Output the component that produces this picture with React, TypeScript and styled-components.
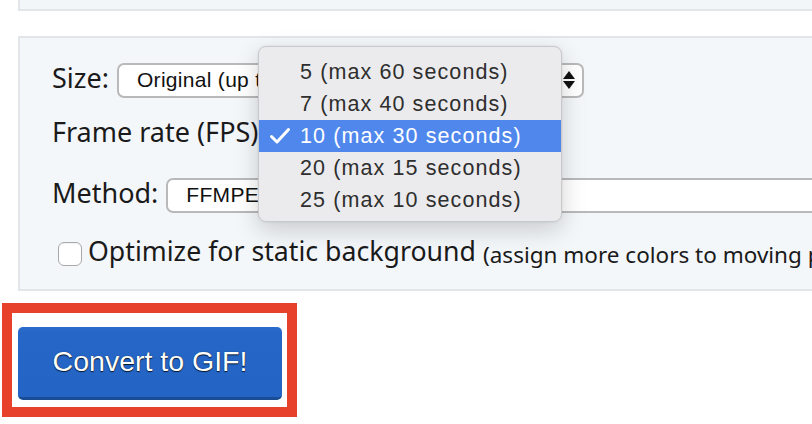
import React from "react";
import styled, { createGlobalStyle } from "styled-components";

const GlobalStyle = createGlobalStyle`
  html, body {
    margin: 0;
    padding: 0;
    background: #ffffff;
    overflow: hidden;
  }
  body {
    font-family: "Noto Sans", "Open Sans", sans-serif;
    color: #1a1a1a;
  }
  * { box-sizing: border-box; }
`;

const Page = styled.div`
  position: relative;
  width: 812px;
  height: 424px;
  overflow: hidden;
`;

const TopPanel = styled.div`
  margin-left: 18px;
  width: 900px;
  height: 11px;
  background: #f3f6f9;
  border: 2px solid #e2e6ea;
  border-top: none;
`;

const OptionsPanel = styled.div`
  margin: 25px 0 0 18px;
  width: 900px;
  height: 255px;
  background: #f4f7fa;
  border: 2px solid #e2e6ea;
  padding: 0 0 0 32px;
  display: flex;
  flex-direction: column;
`;

const Row = styled.div<{ $mt: number }>`
  display: flex;
  align-items: center;
  height: 36px;
  margin-top: ${(p) => p.$mt}px;
`;

const Label = styled.span<{ $gap?: number }>`
  font-size: 27px;
  line-height: 1;
  margin-right: ${(p) => p.$gap ?? 8}px;
  white-space: nowrap;
  position: relative;
  top: -3px;
`;

const Select = styled.div<{ $width: number }>`
  display: flex;
  align-items: center;
  justify-content: space-between;
  width: ${(p) => p.$width}px;
  height: 35px;
  background: #ffffff;
  border: 2px solid #b9b9b9;
  border-radius: 7px;
  padding: 0 6px 0 18px;
  font-family: "Liberation Sans", Arial, sans-serif;
  font-size: 21px;
  letter-spacing: 0.3px;
  color: #111;
  white-space: nowrap;
  overflow: hidden;
`;

const Arrows = styled.svg`
  flex: none;
`;

const CheckRow = styled.label`
  display: flex;
  align-items: center;
  white-space: nowrap;
`;

const CheckBox = styled.span`
  display: inline-block;
  width: 24px;
  height: 24px;
  margin: 0 6px 0 6px;
  background: #ffffff;
  border: 1px solid #a9a9a9;
  border-radius: 6px;
  box-shadow: inset 0 1px 1px rgba(0, 0, 0, 0.05);
  flex: none;
`;

const CheckText = styled.span`
  font-size: 26.7px;
  line-height: 1;
  position: relative;
  top: -3px;
`;

const Note = styled.span`
  font-size: 22.5px;
  margin-left: 7px;
`;

const SubmitFrame = styled.div`
  margin: 12px 0 0 2px;
  width: 295px;
  height: 114px;
  border: 10px solid #e8412b;
  background: #ffffff;
  padding: 14px 0 0 6px;
`;

const ConvertButton = styled.button`
  display: flex;
  align-items: center;
  justify-content: center;
  width: 264px;
  height: 73px;
  background: linear-gradient(#2b6dcc, #2566c6 8%, #2364c4);
  border: none;
  border-bottom: 3px solid #1b4d96;
  border-radius: 5px;
  color: #ffffff;
  font-family: "Liberation Sans", Arial, sans-serif;
  font-size: 28.5px;
  text-shadow: 0 1px 1px rgba(0, 0, 0, 0.75), 0 0 1px rgba(0, 0, 0, 0.6);
  padding: 0 0 2px 0;
  cursor: pointer;
`;

const Menu = styled.ul`
  position: absolute;
  left: 258px;
  top: 46px;
  width: 304px;
  height: 176px;
  margin: 0;
  padding: 9px 0 0 0;
  list-style: none;
  background: #ebebed;
  border: 1px solid #c9c9cb;
  border-radius: 8px;
  box-shadow: 0 8px 24px rgba(0, 0, 0, 0.18), 0 0 3px rgba(0, 0, 0, 0.08);
  font-family: "Liberation Sans", Arial, sans-serif;
`;

const MenuItem = styled.li<{ $active?: boolean }>`
  position: relative;
  display: flex;
  align-items: center;
  height: 32px;
  padding-left: 41px;
  font-size: 21.5px;
  letter-spacing: 1.1px;
  color: ${(p) => (p.$active ? "#ffffff" : "#2e2e2e")};
  background: ${(p) => (p.$active ? "#5087ed" : "transparent")};
`;

const Check = styled.svg`
  position: absolute;
  left: 10px;
  top: 7px;
`;

const options = [
  { fps: 5, max: 60 },
  { fps: 7, max: 40 },
  { fps: 10, max: 30 },
  { fps: 20, max: 15 },
  { fps: 25, max: 10 },
];

export default function App() {
  return (
    <Page>
      <GlobalStyle />
      <TopPanel />
      <OptionsPanel>
        <Row $mt={24}>
          <Label>Size:</Label>
          <Select $width={467}>
            <span>Original (up to 600px)</span>
            <Arrows width="14" height="22" viewBox="0 0 14 22">
              <path d="M7 2 L13 10 H1 Z" fill="#111" />
              <path d="M1 12 H13 L7 20 Z" fill="#111" />
            </Arrows>
          </Select>
        </Row>
        <Row $mt={18}>
          <Label $gap={6}>Frame rate (FPS):</Label>
          <Select $width={280} aria-label="Frame rate" />
        </Row>
        <Row $mt={25}>
          <Label $gap={8}>Method:</Label>
          <Select $width={700}>
            <span>FFMPEG (recommended)</span>
          </Select>
        </Row>
        <Row $mt={23}>
          <CheckRow>
            <CheckBox />
            <CheckText>Optimize for static background</CheckText>
            <Note>(assign more colors to moving parts)</Note>
          </CheckRow>
        </Row>
      </OptionsPanel>
      <SubmitFrame>
        <ConvertButton>Convert to GIF!</ConvertButton>
      </SubmitFrame>
      <Menu>
        {options.map((o) => (
          <MenuItem key={o.fps} $active={o.fps === 10}>
            {o.fps === 10 && (
              <Check width="22" height="18" viewBox="0 0 22 18">
                <path
                  d="M2.5 9.5 L8 15 L19.5 2.5"
                  fill="none"
                  stroke="#ffffff"
                  strokeWidth="3"
                  strokeLinecap="round"
                  strokeLinejoin="round"
                />
              </Check>
            )}
            {o.fps} (max {o.max} seconds)
          </MenuItem>
        ))}
      </Menu>
    </Page>
  );
}
